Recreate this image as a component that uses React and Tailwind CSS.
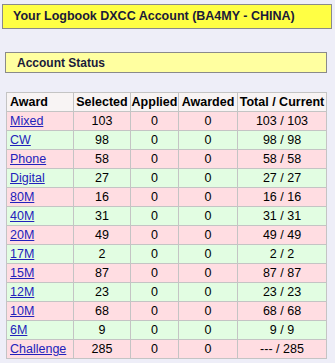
import React from "react";

const rows = [
  ["Mixed", 103, "103 / 103"],
  ["CW", 98, "98 / 98"],
  ["Phone", 58, "58 / 58"],
  ["Digital", 27, "27 / 27"],
  ["80M", 16, "16 / 16"],
  ["40M", 31, "31 / 31"],
  ["20M", 49, "49 / 49"],
  ["17M", 2, "2 / 2"],
  ["15M", 87, "87 / 87"],
  ["12M", 23, "23 / 23"],
  ["10M", 68, "68 / 68"],
  ["6M", 9, "9 / 9"],
  ["Challenge", 285, "--- / 285"],
];

function App() {
  return (
    <div
      className="w-[335px] h-[363px] bg-[#eeeef8] pt-[4px] pl-[2px] overflow-hidden"
      style={{ fontFamily: '"Liberation Sans", Arial, sans-serif' }}
    >
      {/* Title bar */}
      <div className="w-[330px] h-[25px] bg-[#ffff44] border border-[#8a8a8a] pl-[10px] flex items-center text-[12.5px] font-bold text-[#1a1a3a]">
        Your Logbook DXCC Account (BA4MY - CHINA)
      </div>

      {/* Account status */}
      <div className="mt-[23px] ml-[3px] w-[322px] h-[21px] bg-[#ffffa0] border border-[#8a8a8a] pl-[11px] flex items-center text-[12px] font-bold text-[#1a1a3a]">
        Account Status
      </div>

      {/* Table */}
      <table className="mt-[19px] ml-[4px] w-[321px] border-collapse border border-[#a0a0a0] text-[12.5px] leading-[16px] text-black">
        <thead>
          <tr className="bg-[#f8f4f4] h-[19px]">
            <th className="border border-[#c4c4c4] text-left pl-[3px] w-[67px] font-bold p-0">Award</th>
            <th className="border border-[#c4c4c4] w-[57px] font-bold p-0">Selected</th>
            <th className="border border-[#c4c4c4] w-[48px] font-bold p-0">Applied</th>
            <th className="border border-[#c4c4c4] w-[59px] font-bold p-0">Awarded</th>
            <th className="border border-[#c4c4c4] font-bold p-0">Total / Current</th>
          </tr>
        </thead>
        <tbody>
          {rows.map(([name, selected, total], i) => (
            <tr
              key={name}
              className={`h-[19px] ${i % 2 === 0 ? "bg-[#ffdde2]" : "bg-[#e2fde2]"}`}
            >
              <td className="border border-[#c4c4c4] pl-[3px]">
                <a href="#" className="text-[#2222bb] underline">
                  {name}
                </a>
              </td>
              <td className="border border-[#c4c4c4] text-center">{selected}</td>
              <td className="border border-[#c4c4c4] text-center">0</td>
              <td className="border border-[#c4c4c4] text-center">0</td>
              <td className="border border-[#c4c4c4] text-center">{total}</td>
            </tr>
          ))}
        </tbody>
      </table>
    </div>
  );
}

export default App;
